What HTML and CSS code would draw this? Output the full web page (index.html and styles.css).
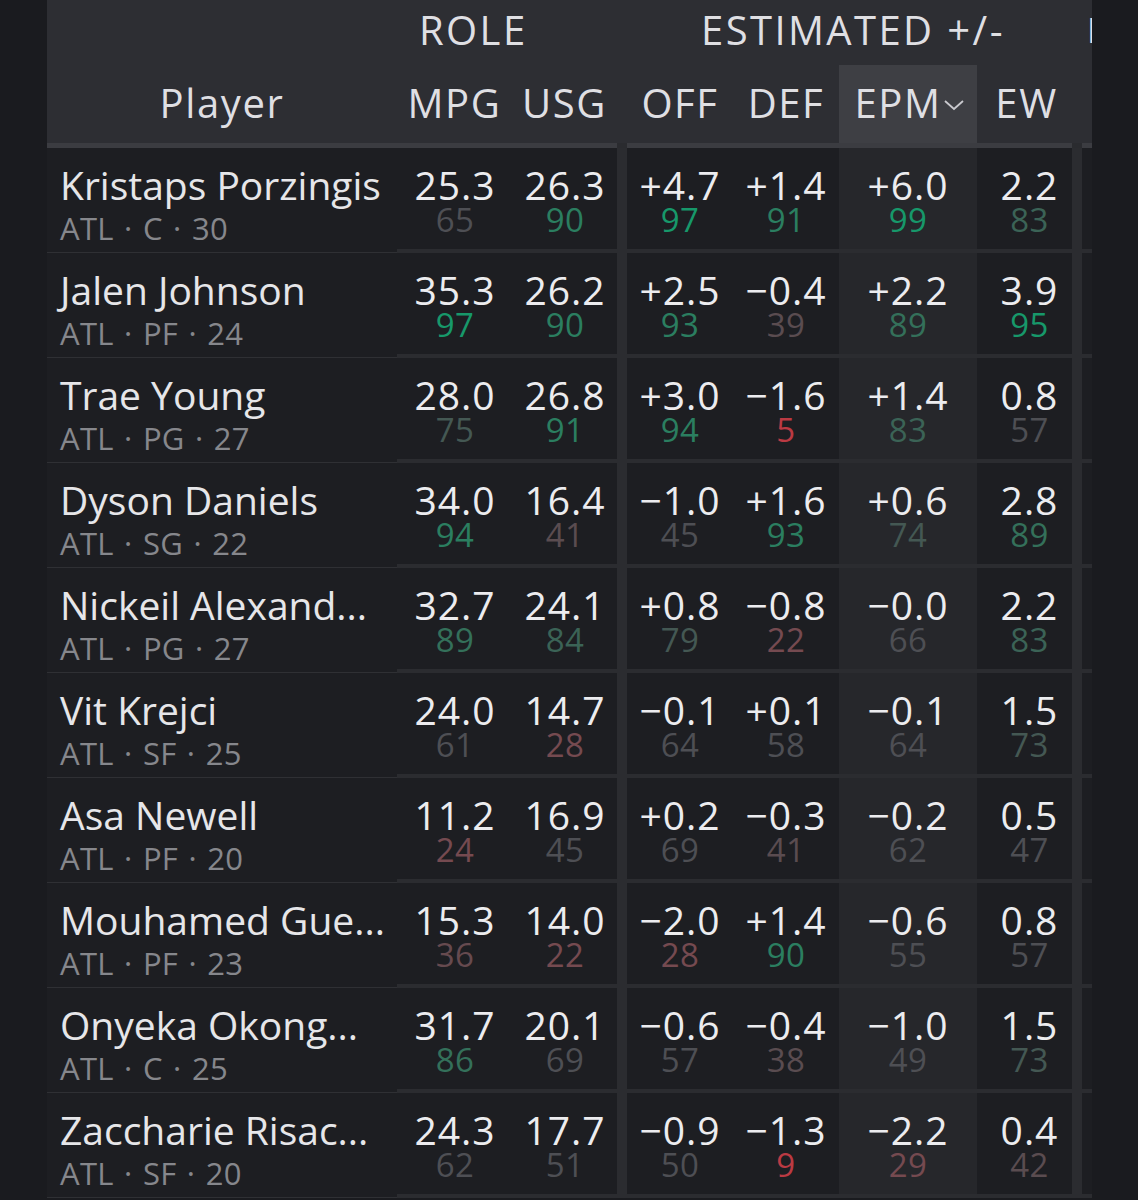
FILE: index.html
```html
<!DOCTYPE html>
<html lang="en">
<head>
<meta charset="utf-8">
<title>EPM table</title>
<link rel="stylesheet" href="styles.css">
</head>
<body>
<div class="table">
  <div class="head">
    <div class="grid grp-row">
      <div></div>
      <div class="grp role">ROLE</div>
      <div></div>
      <div class="grp est">ESTIMATED +/-</div>
      <div></div>
      <div class="grp next">I</div>
    </div>
    <div class="grid col-row">
      <div class="hc">Player</div>
      <div class="hc shift">MPG</div>
      <div class="hc shift">USG</div>
      <div></div>
      <div class="hc">OFF</div>
      <div class="hc">DEF</div>
      <div class="hc active">EPM<svg class="chev" width="24" height="14" viewBox="0 0 24 14"><polyline points="3,3 12,11 21,3" fill="none" stroke="#c9c9ce" stroke-width="1.8"/></svg></div>
      <div class="hc ew">EW</div>
      <div></div>
      <div></div>
    </div>
    <div class="grid head-rule">
      <div class="seg"></div><div class="seg"></div><div class="seg"></div><div class="gap"></div>
      <div class="seg"></div><div class="seg"></div><div class="seg"></div><div class="seg"></div><div class="gap"></div><div class="seg"></div>
    </div>
  </div>

  <div class="grid row">
    <div class="player"><div class="name">Kristaps Porzingis</div><div class="meta">ATL · C · 30</div></div>
    <div class="stat shift"><div class="v">25.3</div><div class="p n">65</div></div>
    <div class="stat shift"><div class="v">26.3</div><div class="p g4">90</div></div>
    <div class="sep"></div>
    <div class="stat"><div class="v">+4.7</div><div class="p g5">97</div></div>
    <div class="stat"><div class="v">+1.4</div><div class="p g4">91</div></div>
    <div class="stat epm"><div class="v">+6.0</div><div class="p g5">99</div></div>
    <div class="stat ew"><div class="v">2.2</div><div class="p g2">83</div></div>
    <div class="sep"></div>
    <div class="stat"></div>
  </div>

  <div class="grid row">
    <div class="player"><div class="name">Jalen Johnson</div><div class="meta">ATL · PF · 24</div></div>
    <div class="stat shift"><div class="v">35.3</div><div class="p g5">97</div></div>
    <div class="stat shift"><div class="v">26.2</div><div class="p g4">90</div></div>
    <div class="sep"></div>
    <div class="stat"><div class="v">+2.5</div><div class="p g4">93</div></div>
    <div class="stat"><div class="v">−0.4</div><div class="p r1">39</div></div>
    <div class="stat epm"><div class="v">+2.2</div><div class="p g3">89</div></div>
    <div class="stat ew"><div class="v">3.9</div><div class="p g5">95</div></div>
    <div class="sep"></div>
    <div class="stat"></div>
  </div>

  <div class="grid row">
    <div class="player"><div class="name">Trae Young</div><div class="meta">ATL · PG · 27</div></div>
    <div class="stat shift"><div class="v">28.0</div><div class="p g1">75</div></div>
    <div class="stat shift"><div class="v">26.8</div><div class="p g4">91</div></div>
    <div class="sep"></div>
    <div class="stat"><div class="v">+3.0</div><div class="p g4">94</div></div>
    <div class="stat"><div class="v">−1.6</div><div class="p r5">5</div></div>
    <div class="stat epm"><div class="v">+1.4</div><div class="p g2">83</div></div>
    <div class="stat ew"><div class="v">0.8</div><div class="p n">57</div></div>
    <div class="sep"></div>
    <div class="stat"></div>
  </div>

  <div class="grid row">
    <div class="player"><div class="name">Dyson Daniels</div><div class="meta">ATL · SG · 22</div></div>
    <div class="stat shift"><div class="v">34.0</div><div class="p g4">94</div></div>
    <div class="stat shift"><div class="v">16.4</div><div class="p r1">41</div></div>
    <div class="sep"></div>
    <div class="stat"><div class="v">−1.0</div><div class="p n">45</div></div>
    <div class="stat"><div class="v">+1.6</div><div class="p g4">93</div></div>
    <div class="stat epm"><div class="v">+0.6</div><div class="p g1">74</div></div>
    <div class="stat ew"><div class="v">2.8</div><div class="p g3">89</div></div>
    <div class="sep"></div>
    <div class="stat"></div>
  </div>

  <div class="grid row">
    <div class="player"><div class="name">Nickeil Alexand...</div><div class="meta">ATL · PG · 27</div></div>
    <div class="stat shift"><div class="v">32.7</div><div class="p g3">89</div></div>
    <div class="stat shift"><div class="v">24.1</div><div class="p g2">84</div></div>
    <div class="sep"></div>
    <div class="stat"><div class="v">+0.8</div><div class="p g1">79</div></div>
    <div class="stat"><div class="v">−0.8</div><div class="p r3">22</div></div>
    <div class="stat epm"><div class="v">−0.0</div><div class="p n">66</div></div>
    <div class="stat ew"><div class="v">2.2</div><div class="p g2">83</div></div>
    <div class="sep"></div>
    <div class="stat"></div>
  </div>

  <div class="grid row">
    <div class="player"><div class="name">Vit Krejci</div><div class="meta">ATL · SF · 25</div></div>
    <div class="stat shift"><div class="v">24.0</div><div class="p n">61</div></div>
    <div class="stat shift"><div class="v">14.7</div><div class="p r3">28</div></div>
    <div class="sep"></div>
    <div class="stat"><div class="v">−0.1</div><div class="p n">64</div></div>
    <div class="stat"><div class="v">+0.1</div><div class="p n">58</div></div>
    <div class="stat epm"><div class="v">−0.1</div><div class="p n">64</div></div>
    <div class="stat ew"><div class="v">1.5</div><div class="p g1">73</div></div>
    <div class="sep"></div>
    <div class="stat"></div>
  </div>

  <div class="grid row">
    <div class="player"><div class="name">Asa Newell</div><div class="meta">ATL · PF · 20</div></div>
    <div class="stat shift"><div class="v">11.2</div><div class="p r3">24</div></div>
    <div class="stat shift"><div class="v">16.9</div><div class="p n">45</div></div>
    <div class="sep"></div>
    <div class="stat"><div class="v">+0.2</div><div class="p n">69</div></div>
    <div class="stat"><div class="v">−0.3</div><div class="p r1">41</div></div>
    <div class="stat epm"><div class="v">−0.2</div><div class="p n">62</div></div>
    <div class="stat ew"><div class="v">0.5</div><div class="p n">47</div></div>
    <div class="sep"></div>
    <div class="stat"></div>
  </div>

  <div class="grid row">
    <div class="player"><div class="name">Mouhamed Gue...</div><div class="meta">ATL · PF · 23</div></div>
    <div class="stat shift"><div class="v">15.3</div><div class="p r2">36</div></div>
    <div class="stat shift"><div class="v">14.0</div><div class="p r3">22</div></div>
    <div class="sep"></div>
    <div class="stat"><div class="v">−2.0</div><div class="p r3">28</div></div>
    <div class="stat"><div class="v">+1.4</div><div class="p g4">90</div></div>
    <div class="stat epm"><div class="v">−0.6</div><div class="p n">55</div></div>
    <div class="stat ew"><div class="v">0.8</div><div class="p n">57</div></div>
    <div class="sep"></div>
    <div class="stat"></div>
  </div>

  <div class="grid row">
    <div class="player"><div class="name">Onyeka Okong...</div><div class="meta">ATL · C · 25</div></div>
    <div class="stat shift"><div class="v">31.7</div><div class="p g3">86</div></div>
    <div class="stat shift"><div class="v">20.1</div><div class="p n">69</div></div>
    <div class="sep"></div>
    <div class="stat"><div class="v">−0.6</div><div class="p n">57</div></div>
    <div class="stat"><div class="v">−0.4</div><div class="p r1">38</div></div>
    <div class="stat epm"><div class="v">−1.0</div><div class="p n">49</div></div>
    <div class="stat ew"><div class="v">1.5</div><div class="p g1">73</div></div>
    <div class="sep"></div>
    <div class="stat"></div>
  </div>

  <div class="grid row">
    <div class="player"><div class="name">Zaccharie Risac...</div><div class="meta">ATL · SF · 20</div></div>
    <div class="stat shift"><div class="v">24.3</div><div class="p n">62</div></div>
    <div class="stat shift"><div class="v">17.7</div><div class="p n">51</div></div>
    <div class="sep"></div>
    <div class="stat"><div class="v">−0.9</div><div class="p n">50</div></div>
    <div class="stat"><div class="v">−1.3</div><div class="p r5">9</div></div>
    <div class="stat epm"><div class="v">−2.2</div><div class="p r3">29</div></div>
    <div class="stat ew"><div class="v">0.4</div><div class="p r1">42</div></div>
    <div class="sep"></div>
    <div class="stat"></div>
  </div>
</div>
</body>
</html>
```

FILE: styles.css
```css
html, body {
  margin: 0;
  padding: 0;
  background: #1a1b1f;
}
body {
  font-family: "Open Sans", "Noto Sans", "Liberation Sans", sans-serif;
  color: #e6e6e9;
  height: 1200px;
  overflow: hidden;
}
.table {
  margin-left: 47px;
  width: 1045px;
  overflow: hidden;
}
.grid {
  display: grid;
  grid-template-columns: 350px 110px 110px 10px 106px 106px 138px 95px 10px 10px;
}
.head {
  background: #2d2e33;
}
.grp-row {
  height: 65px;
  grid-template-columns: 350px 220px 10px 445px 10px 10px;
  font-size: 40px;
  line-height: 60px;
  letter-spacing: 2.4px;
  color: #dfdfe3;
  white-space: nowrap;
}
.grp {
  overflow: hidden;
}
.role {
  padding-left: 22px;
}
.est {
  padding-left: 74px;
}
.next {
  padding-left: 5px;
  font-size: 34px;
  letter-spacing: 0;
}
.col-row {
  height: 78px;
}
.hc {
  display: flex;
  align-items: center;
  justify-content: center;
  font-size: 40px;
  letter-spacing: 1.6px;
  color: #dfdfe3;
  padding-bottom: 4px;
}
.hc.shift {
  padding-left: 5px;
}
.hc.ew {
  padding-left: 4px;
}
.hc.active {
  background: #3e3f44;
  padding-left: 4px;
}
.chev {
  margin-left: 0;
  margin-top: 6px;
}
.head-rule {
  height: 5px;
}
.head-rule .seg {
  background: #3b3c41;
}
.head-rule .gap {
  background: #2a2b2f;
}
.row {
  height: 105px;
  background: #2b2c30;
}
.player {
  background: #1d1e22;
  border-bottom: 1px solid #2f3034;
  padding: 17px 0 0 13px;
  white-space: nowrap;
  overflow: hidden;
}
.name {
  font-size: 39px;
  line-height: 40px;
  color: #e6e6e9;
}
.meta {
  font-size: 31px;
  line-height: 34px;
  margin-top: 6px;
  word-spacing: 2px;
  letter-spacing: 0.3px;
  color: #86878c;
}
.stat {
  background: #1d1e22;
  margin-bottom: 4px;
  padding-top: 19px;
  text-align: center;
}
.stat.shift {
  padding-left: 6px;
}
.stat.ew {
  padding-left: 10px;
}
.stat.epm {
  background: #26272b;
}
.sep {
  background: #2b2c30;
}
.v {
  font-size: 39px;
  line-height: 36px;
  letter-spacing: 1px;
  color: #ececef;
}
.p {
  font-size: 33px;
  line-height: 34px;
  font-weight: 500;
  letter-spacing: 0.5px;
}
.g5 { color: #17986a; }
.g4 { color: #2b7e60; }
.g3 { color: #34705a; }
.g2 { color: #3b6356; }
.g1 { color: #445853; }
.n  { color: #4e4f54; }
.r1 { color: #5a4c50; }
.r2 { color: #664a4f; }
.r3 { color: #754a50; }
.r5 { color: #bb3a43; }
```
